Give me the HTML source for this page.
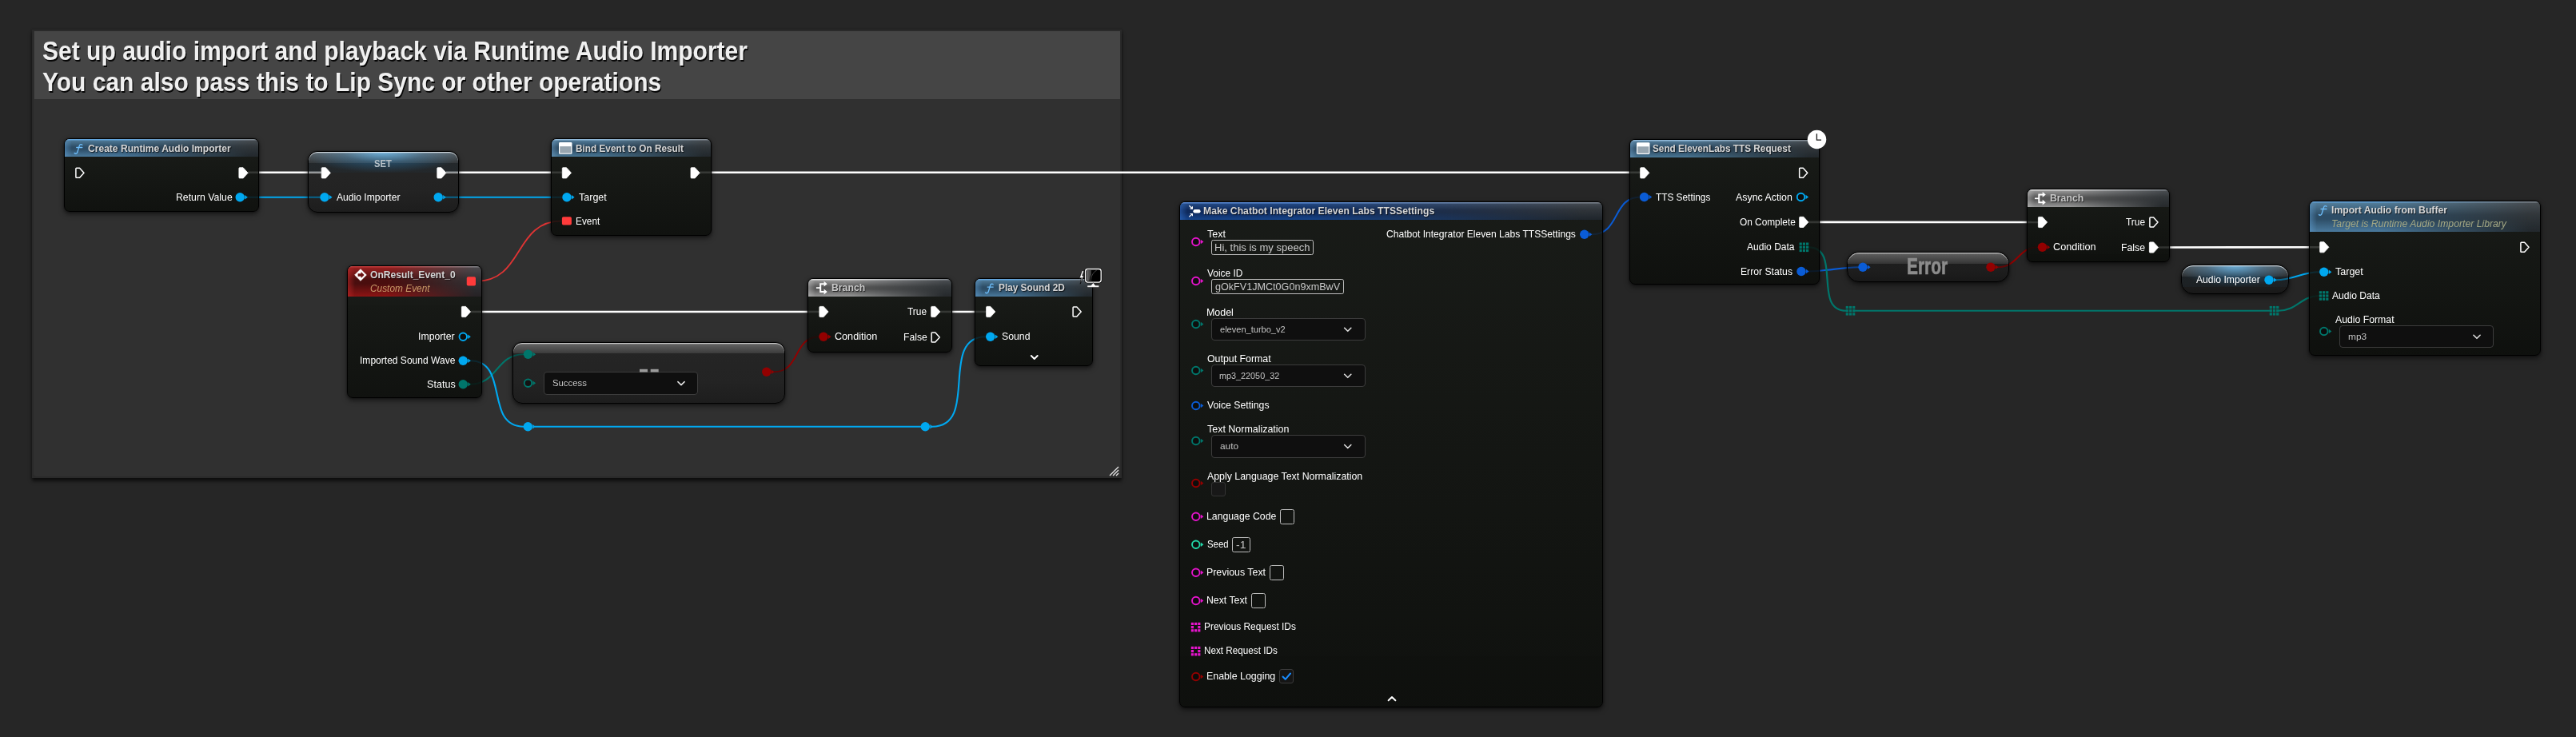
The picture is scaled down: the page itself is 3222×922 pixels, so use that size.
<!DOCTYPE html><html><head><meta charset="utf-8"><title>Blueprint</title><style>

html,body{margin:0;padding:0}
body{width:3222px;height:922px;background:#262626;position:relative;overflow:hidden;font-family:"Liberation Sans",sans-serif}
.node{position:absolute;box-sizing:border-box;border:1px solid #000;background:linear-gradient(180deg,rgba(22,25,21,.84),rgba(11,13,10,.86));box-shadow:0 3px 6px rgba(0,0,0,.55),0 0 2px rgba(0,0,0,.6);overflow:hidden}
.vnode{background:linear-gradient(180deg,rgba(18,18,18,.36),rgba(16,16,16,.40) 65%,rgba(12,12,12,.52))}
.nh{position:absolute;left:0;top:0;right:0}
.cs{position:absolute;left:0;top:0;right:0;-webkit-mask-image:linear-gradient(90deg,#000 0,#000 30%,rgba(0,0,0,.06) 95%,rgba(0,0,0,.05) 100%);mask-image:linear-gradient(90deg,#000 0,#000 30%,rgba(0,0,0,.06) 95%,rgba(0,0,0,.05) 100%)}
.gl{position:absolute;left:0;top:0;right:0}
.dd{position:absolute;background:#0f0f0f;border:1px solid #3c3c3c;border-radius:4px}
.tb{position:absolute;background:transparent;border:1px solid #bdbdbd;border-radius:2.5px}
.t{position:absolute;white-space:nowrap;line-height:1;transform-origin:0 50%}
svg{position:absolute;left:0;top:0;overflow:visible}
#cm{position:absolute;left:40px;top:37px;width:1363px;height:561px;background:#2a2a2a;box-shadow:0 4px 4px rgba(0,0,0,.6),0 0 3px rgba(0,0,0,.25)}
#cmb{position:absolute;left:42.4px;top:39px;width:1358.6px;height:557px;background:#303030;border-radius:0 0 4px 4px}
#cmt{position:absolute;left:43px;top:39px;width:1358px;height:85.4px;background:#454545}

</style></head><body>
<div id="cm"></div><div id="cmb"></div><div id="cmt"></div>
<svg width="3222" height="922" viewBox="0 0 3222 922"><path d="M310,215.8 L402,215.8" fill="none" stroke="#fff" stroke-width="2.6"/><path d="M558,215.8 L703,215.8" fill="none" stroke="#fff" stroke-width="2.6"/><path d="M875,215.8 L2052,215.8" fill="none" stroke="#fff" stroke-width="2.6"/><path d="M589,390 L1025,390" fill="none" stroke="#fff" stroke-width="2.6"/><path d="M1176,390 L1234,390" fill="none" stroke="#fff" stroke-width="2.6"/><path d="M2262,277.9 L2550,278" fill="none" stroke="#fff" stroke-width="2.6"/><path d="M2700,309.5 L2902,309.25" fill="none" stroke="#fff" stroke-width="2.6"/><path d="M309,246.7 L401,246.7" fill="none" stroke="#00a8f0" stroke-width="2.1"/><path d="M557,246.7 L704,246.7" fill="none" stroke="#00a8f0" stroke-width="2.1"/><path d="M595,352 C656.20,352 641.80,276.4 703,276.4" fill="none" stroke="#e03434" stroke-width="1.8" stroke-linecap="round" /><path d="M588,480.75 C622.83,480.75 620.17,443.25 655,443.25" fill="none" stroke="#00766b" stroke-width="2.0" stroke-linecap="round" /><path d="M588,451.25 C637.82,451.25 605.18,533.7 655,533.7" fill="none" stroke="#00a8f0" stroke-width="2.1" stroke-linecap="round" /><path d="M669,533.7 L1152,533.7" fill="none" stroke="#00a8f0" stroke-width="2.1"/><path d="M1166,533.7 C1225.82,533.7 1173.18,421.25 1233,421.25" fill="none" stroke="#00a8f0" stroke-width="2.1" stroke-linecap="round" /><path d="M968,465.25 C1001.67,465.25 991.33,421.25 1025,421.25" fill="none" stroke="#930000" stroke-width="1.9" stroke-linecap="round" /><path d="M1991,293.25 C2026.92,293.25 2016.08,246.5 2052,246.5" fill="none" stroke="#0a5cd6" stroke-width="2.1" stroke-linecap="round" /><path d="M2262,339.5 C2284.75,339.5 2302.25,334.25 2325,334.25" fill="none" stroke="#0a5cd6" stroke-width="2.1" stroke-linecap="round" /><path d="M2499,334.25 C2524.00,334.25 2524.00,309.25 2549,309.25" fill="none" stroke="#930000" stroke-width="1.9" stroke-linecap="round" /><path d="M2262,309.3 C2304.15,309.3 2266.85,388.75 2309,388.75" fill="none" stroke="#00766b" stroke-width="2.2" stroke-linecap="round" /><path d="M2320,388.75 L2839,388.75" fill="none" stroke="#00766b" stroke-width="2.2"/><path d="M2850,388.75 C2873.25,388.75 2877.75,370 2901,370" fill="none" stroke="#00766b" stroke-width="2.2" stroke-linecap="round" /><path d="M2847,350.25 C2868.33,350.25 2879.67,340.25 2901,340.25" fill="none" stroke="#00a8f0" stroke-width="2.1" stroke-linecap="round" /></svg>
<div class="node " style="left:80px;top:173px;width:244px;height:91.5px;border-radius:7px"><div class="nh" style="height:22px;background:linear-gradient(180deg,#4a4e52 0,#33373a 40%,#202427 100%);box-shadow:inset 0 1.5px 0 #80868c"><div class="cs" style="height:22px;background:linear-gradient(90deg,rgba(90,150,200,.55) 0,rgba(0,0,0,0) 9px),linear-gradient(180deg,#56829f 0,#2d4d66 45%,#2d4d66 58%,#4a7a9e 100%);box-shadow:inset 0 1.5px 0 #62a4dc"></div></div></div>
<div class="node vnode" style="left:385px;top:189px;width:189px;height:76.5px;border-radius:12px"><div class="gl" style="height:26px;border-radius:11px 11px 0 0;background:radial-gradient(ellipse 55% 100% at 50% 0,rgba(70,165,225,.9),rgba(40,105,150,.55) 50%,rgba(30,60,80,.15) 100%)"></div><div class="gl" style="height:13.5px;border-radius:11px 11px 0 0;background:linear-gradient(180deg,rgba(255,255,255,.25),rgba(255,255,255,.07));box-shadow:inset 0 1.2px 0 rgba(240,245,250,.75)"></div></div>
<div class="node " style="left:689px;top:173px;width:200.6px;height:121.5px;border-radius:7px"><div class="nh" style="height:22px;background:linear-gradient(180deg,#4a4e52 0,#33373a 40%,#202427 100%);box-shadow:inset 0 1.5px 0 #80868c"><div class="cs" style="height:22px;background:linear-gradient(90deg,rgba(110,160,200,.5) 0,rgba(0,0,0,0) 9px),linear-gradient(180deg,#5a85a3 0,#2c4a62 45%,#2c4a62 58%,#4a7896 100%);box-shadow:inset 0 1.5px 0 #90b8d8"></div></div></div>
<div class="node " style="left:433.75px;top:331.75px;width:168.75px;height:166.5px;border-radius:7px"><div class="nh" style="height:38.5px;background:linear-gradient(180deg,#4a4e52 0,#33373a 40%,#202427 100%);box-shadow:inset 0 1.5px 0 #80868c"><div class="cs" style="height:38.5px;background:linear-gradient(90deg,rgba(190,40,40,.55) 0,rgba(0,0,0,0) 9px),linear-gradient(180deg,#a02222 0,#4a0e0e 45%,#4a0e0e 58%,#8e1414 100%);box-shadow:inset 0 1.5px 0 #c03a3a"></div></div></div>
<div class="node vnode" style="left:641.25px;top:427.5px;width:340.5px;height:77px;border-radius:12px"><div class="gl" style="height:13.5px;border-radius:11px 11px 0 0;background:linear-gradient(180deg,rgba(255,255,255,.30),rgba(255,255,255,.10));box-shadow:inset 0 1.2px 0 rgba(240,240,240,.7)"></div></div>
<div class="dd" style="left:680px;top:465px;width:191px;height:26.6px"></div>
<div class="node " style="left:1010px;top:348px;width:181px;height:92.6px;border-radius:7px"><div class="nh" style="height:22px;background:linear-gradient(180deg,#4a4e52 0,#33373a 40%,#202427 100%);box-shadow:inset 0 1.5px 0 #80868c"><div class="cs" style="height:22px;background:linear-gradient(90deg,rgba(200,200,200,.45) 0,rgba(0,0,0,0) 9px),linear-gradient(180deg,#a2a2a2 0,#585858 45%,#585858 58%,#989898 100%);box-shadow:inset 0 1.5px 0 #dcdcdc"></div></div></div>
<div class="node " style="left:1219px;top:348px;width:147.6px;height:110px;border-radius:7px"><div class="nh" style="height:22px;background:linear-gradient(180deg,#4a4e52 0,#33373a 40%,#202427 100%);box-shadow:inset 0 1.5px 0 #80868c"><div class="cs" style="height:22px;background:linear-gradient(90deg,rgba(90,150,200,.55) 0,rgba(0,0,0,0) 9px),linear-gradient(180deg,#56829f 0,#2d4d66 45%,#2d4d66 58%,#4a7a9e 100%);box-shadow:inset 0 1.5px 0 #62a4dc"></div></div></div>
<div class="node " style="left:1475px;top:251.5px;width:529.5px;height:633.4px;border-radius:7px"><div class="nh" style="height:22px;background:linear-gradient(180deg,#4a4e52 0,#33373a 40%,#202427 100%);box-shadow:inset 0 1.5px 0 #80868c"><div class="cs" style="height:22px;background:linear-gradient(90deg,rgba(50,110,200,.5) 0,rgba(0,0,0,0) 9px),linear-gradient(180deg,#28508c 0,#0f2a5c 45%,#0f2a5c 58%,#16448c 100%);box-shadow:inset 0 1.5px 0 #5a8cd8"></div></div></div>
<div class="tb" style="left:1515px;top:300.25px;width:126px;height:17px"></div>
<div class="tb" style="left:1515px;top:349.25px;width:164px;height:17px"></div>
<div class="dd" style="left:1515px;top:398px;width:190.5px;height:26px"></div>
<div class="dd" style="left:1515px;top:456px;width:190.5px;height:26px"></div>
<div class="dd" style="left:1515px;top:544px;width:190.5px;height:26.5px"></div>
<div style="position:absolute;left:1515px;top:603.25px;width:16px;height:15.5px;border:1px solid #333;border-radius:3px;background:#181818"></div>
<div class="tb" style="left:1601px;top:637.25px;width:16px;height:16.5px"></div>
<div class="tb" style="left:1541px;top:672px;width:21px;height:16.75px"></div>
<div class="tb" style="left:1588px;top:707.25px;width:16px;height:16.5px"></div>
<div class="tb" style="left:1565px;top:742.25px;width:16px;height:16.75px"></div>
<div style="position:absolute;left:1600.25px;top:837.25px;width:15.75px;height:15.25px;border:1px solid #3a3a3a;border-radius:3px;background:#151515"></div>
<div class="node " style="left:2038.25px;top:174.25px;width:237.25px;height:181.5px;border-radius:7px"><div class="nh" style="height:22px;background:linear-gradient(180deg,#4a4e52 0,#33373a 40%,#202427 100%);box-shadow:inset 0 1.5px 0 #80868c"><div class="cs" style="height:22px;background:linear-gradient(90deg,rgba(110,160,200,.5) 0,rgba(0,0,0,0) 9px),linear-gradient(180deg,#5a85a3 0,#2c4a62 45%,#2c4a62 58%,#4a7896 100%);box-shadow:inset 0 1.5px 0 #90b8d8"></div></div></div>
<div class="node vnode" style="left:2310px;top:315px;width:203px;height:37.5px;border-radius:15px"><div class="gl" style="height:14px;border-radius:14px 14px 0 0;background:linear-gradient(180deg,rgba(255,255,255,.30),rgba(255,255,255,.10));box-shadow:inset 0 1.2px 0 rgba(240,240,240,.7)"></div></div>
<div class="node " style="left:2534.6px;top:236px;width:179.2px;height:92px;border-radius:7px"><div class="nh" style="height:22px;background:linear-gradient(180deg,#4a4e52 0,#33373a 40%,#202427 100%);box-shadow:inset 0 1.5px 0 #80868c"><div class="cs" style="height:22px;background:linear-gradient(90deg,rgba(200,200,200,.45) 0,rgba(0,0,0,0) 9px),linear-gradient(180deg,#a2a2a2 0,#585858 45%,#585858 58%,#989898 100%);box-shadow:inset 0 1.5px 0 #dcdcdc"></div></div></div>
<div class="node vnode" style="left:2727.5px;top:331.4px;width:135px;height:37px;border-radius:15px"><div class="gl" style="height:27px;border-radius:14px 14px 0 0;background:radial-gradient(ellipse 55% 100% at 50% 0,rgba(70,165,225,.9),rgba(40,105,150,.55) 50%,rgba(30,60,80,.15) 100%)"></div><div class="gl" style="height:14px;border-radius:14px 14px 0 0;background:linear-gradient(180deg,rgba(255,255,255,.25),rgba(255,255,255,.07));box-shadow:inset 0 1.2px 0 rgba(240,245,250,.75)"></div></div>
<div class="node " style="left:2887.5px;top:250.5px;width:290px;height:194.5px;border-radius:7px"><div class="nh" style="height:38.2px;background:linear-gradient(180deg,#4a4e52 0,#33373a 40%,#202427 100%);box-shadow:inset 0 1.5px 0 #80868c"><div class="cs" style="height:38.2px;background:linear-gradient(90deg,rgba(90,150,200,.55) 0,rgba(0,0,0,0) 9px),linear-gradient(180deg,#56829f 0,#2d4d66 45%,#2d4d66 58%,#4a7a9e 100%);box-shadow:inset 0 1.5px 0 #62a4dc"></div></div></div>
<div class="dd" style="left:2926px;top:407px;width:191px;height:26px"></div>
<svg width="3222" height="922" viewBox="0 0 3222 922"><path d="M1388,595 L1399,584 M1392,595 L1399,588 M1396,595 L1399,592" stroke="#e8e8e8" stroke-width="1.3" fill="none"/><path d="M102.8,181.3 C101.8,180.1 99.8,180.3 99.19999999999999,182.6 L96.89999999999999,190.2 C96.3,192.2 94.5,192.8 93.19999999999999,191.5" fill="none" stroke="#6cbcf8" stroke-width="1.35" stroke-linecap="round"/><path d="M95.8,184.5 H102.8" fill="none" stroke="#6cbcf8" stroke-width="1.3" stroke-linecap="round"/><path d="M95.6,210.3 H99.6 L105,216.3 L99.6,222.3 H95.6 Q94.9,222.3 94.9,221.5 V211.10000000000002 Q94.9,210.3 95.6,210.3 Z" fill="none" stroke="#fff" stroke-width="1.5" stroke-linejoin="round"/><path d="M299.7,209.70000000000002 H304.1 L310.1,216.3 L304.1,222.9 H299.7 Q298.9,222.9 298.9,221.9 V210.70000000000002 Q298.9,209.70000000000002 299.7,209.70000000000002 Z" fill="#fff" stroke="#fff" stroke-width="0.8" stroke-linejoin="round"/><circle cx="300.2" cy="246.7" r="5.7" fill="#00a8f0"/><path d="M306.2,244.0 L309.8,246.7 L306.2,249.39999999999998 Z" fill="#00a8f0"/><path d="M403.0,209.70000000000002 H407.40000000000003 L413.40000000000003,216.3 L407.40000000000003,222.9 H403.0 Q402.2,222.9 402.2,221.9 V210.70000000000002 Q402.2,209.70000000000002 403.0,209.70000000000002 Z" fill="#fff" stroke="#fff" stroke-width="0.8" stroke-linejoin="round"/><path d="M547.6,209.70000000000002 H552.0 L558.0,216.3 L552.0,222.9 H547.6 Q546.8,222.9 546.8,221.9 V210.70000000000002 Q546.8,209.70000000000002 547.6,209.70000000000002 Z" fill="#fff" stroke="#fff" stroke-width="0.8" stroke-linejoin="round"/><circle cx="406" cy="246.7" r="5.7" fill="#00a8f0"/><path d="M412.0,244.0 L415.6,246.7 L412.0,249.39999999999998 Z" fill="#00a8f0"/><circle cx="548.2" cy="246.7" r="5.7" fill="#00a8f0"/><path d="M554.2,244.0 L557.8000000000001,246.7 L554.2,249.39999999999998 Z" fill="#00a8f0"/><rect x="699" y="178" width="16.5" height="14.8" rx="1.4" fill="#fff"/><rect x="700.2" y="183.1" width="14.1" height="8.5" fill="#98a6b0"/><path d="M704.1,209.70000000000002 H708.5 L714.5,216.3 L708.5,222.9 H704.1 Q703.3,222.9 703.3,221.9 V210.70000000000002 Q703.3,209.70000000000002 704.1,209.70000000000002 Z" fill="#fff" stroke="#fff" stroke-width="0.8" stroke-linejoin="round"/><path d="M864.8000000000001,209.70000000000002 H869.2 L875.2,216.3 L869.2,222.9 H864.8000000000001 Q864.0,222.9 864.0,221.9 V210.70000000000002 Q864.0,209.70000000000002 864.8000000000001,209.70000000000002 Z" fill="#fff" stroke="#fff" stroke-width="0.8" stroke-linejoin="round"/><circle cx="709" cy="246.7" r="5.7" fill="#00a8f0"/><path d="M715.0,244.0 L718.6,246.7 L715.0,249.39999999999998 Z" fill="#00a8f0"/><rect x="702.9" y="271.2" width="12" height="10.4" rx="1.8" fill="#ff3b3b"/><path d="M443.7,344 L451,336.7 L458.3,344 L451,351.3 Z" fill="#fff" stroke="#fff" stroke-width="0.8" stroke-linejoin="round"/><path d="M447.6,342.3 H451.6 V340.1 L455.6,344 L451.6,347.9 V345.7 H447.6 Z" fill="#6a1010"/><rect x="583.75" y="346.25" width="11.25" height="11.25" rx="1.8" fill="#ff3b3b"/><path d="M578.2,383.4 H582.6 L588.6,390 L582.6,396.6 H578.2 Q577.4,396.6 577.4,395.6 V384.4 Q577.4,383.4 578.2,383.4 Z" fill="#fff" stroke="#fff" stroke-width="0.8" stroke-linejoin="round"/><circle cx="579.25" cy="421.25" r="4.75" fill="rgba(8,8,8,.55)" stroke="#00a8f0" stroke-width="1.9"/><path d="M585.25,418.55 L588.85,421.25 L585.25,423.95 Z" fill="#00a8f0"/><circle cx="579.25" cy="451.25" r="5.7" fill="#00a8f0"/><path d="M585.25,448.55 L588.85,451.25 L585.25,453.95 Z" fill="#00a8f0"/><circle cx="579.25" cy="480.75" r="5.7" fill="#00766b"/><path d="M585.25,478.05 L588.85,480.75 L585.25,483.45 Z" fill="#00766b"/><circle cx="660.5" cy="443.25" r="5.7" fill="#00766b"/><path d="M666.5,440.55 L670.1,443.25 L666.5,445.95 Z" fill="#00766b"/><circle cx="660.5" cy="479.25" r="4.75" fill="rgba(8,8,8,.55)" stroke="#00766b" stroke-width="1.9"/><path d="M666.5,476.55 L670.1,479.25 L666.5,481.95 Z" fill="#00766b"/><circle cx="958.75" cy="465.25" r="5.7" fill="#930000"/><path d="M964.75,462.55 L968.35,465.25 L964.75,467.95 Z" fill="#930000"/><rect x="800" y="461.8" width="10" height="3.7" fill="#9a9a9a"/><rect x="813.7" y="461.8" width="10" height="3.7" fill="#9a9a9a"/><path d="M847.9,477.6 L852,481.6 L856.1,477.6" fill="none" stroke="#e0e0e0" stroke-width="1.6" stroke-linecap="round" stroke-linejoin="round"/><path d="M1020.9,360.1 H1026.1" stroke="#fff" stroke-width="1.7" fill="none"/><path d="M1030.9,355.20000000000005 H1026.2 V365.0 H1030.9" stroke="#fff" stroke-width="2" fill="none"/><path d="M1030.6,351.8 L1034.7,355.20000000000005 L1030.6,358.6 Z M1030.6,361.6 L1034.7,365.0 L1030.6,368.40000000000003 Z" fill="#fff"/><path d="M1025.7,383.4 H1030.1 L1036.1,390 L1030.1,396.6 H1025.7 Q1024.9,396.6 1024.9,395.6 V384.4 Q1024.9,383.4 1025.7,383.4 Z" fill="#fff" stroke="#fff" stroke-width="0.8" stroke-linejoin="round"/><path d="M1165.45,383.4 H1169.85 L1175.85,390 L1169.85,396.6 H1165.45 Q1164.65,396.6 1164.65,395.6 V384.4 Q1164.65,383.4 1165.45,383.4 Z" fill="#fff" stroke="#fff" stroke-width="0.8" stroke-linejoin="round"/><circle cx="1030" cy="421.25" r="5.7" fill="#930000"/><path d="M1036.0,418.55 L1039.6,421.25 L1036.0,423.95 Z" fill="#930000"/><path d="M1165.85,416 H1169.85 L1175.25,422 L1169.85,428 H1165.85 Q1165.15,428 1165.15,427.2 V416.8 Q1165.15,416 1165.85,416 Z" fill="none" stroke="#fff" stroke-width="1.5" stroke-linejoin="round"/><path d="M1242.2,355.90000000000003 C1241.2,354.70000000000005 1239.2,354.90000000000003 1238.6,357.20000000000005 L1236.3,364.8 C1235.7,366.8 1233.9,367.40000000000003 1232.6,366.1" fill="none" stroke="#6cbcf8" stroke-width="1.35" stroke-linecap="round"/><path d="M1235.2,359.1 H1242.2" fill="none" stroke="#6cbcf8" stroke-width="1.3" stroke-linecap="round"/><path d="M1234.45,383.4 H1238.85 L1244.85,390 L1238.85,396.6 H1234.45 Q1233.65,396.6 1233.65,395.6 V384.4 Q1233.65,383.4 1234.45,383.4 Z" fill="#fff" stroke="#fff" stroke-width="0.8" stroke-linejoin="round"/><path d="M1342.8,384 H1346.8 L1352.2,390 L1346.8,396 H1342.8 Q1342.1000000000001,396 1342.1000000000001,395.2 V384.8 Q1342.1000000000001,384 1342.8,384 Z" fill="none" stroke="#fff" stroke-width="1.5" stroke-linejoin="round"/><circle cx="1238.75" cy="421.25" r="5.7" fill="#00a8f0"/><path d="M1244.75,418.55 L1248.35,421.25 L1244.75,423.95 Z" fill="#00a8f0"/><path d="M1289.8,445 L1293.75,449 L1297.7,445" fill="none" stroke="#fff" stroke-width="1.9" stroke-linecap="round" stroke-linejoin="round"/><defs><linearGradient id="mg" x1="0" y1="0" x2="1" y2="0"><stop offset="0" stop-color="#6a6a6a"/><stop offset=".45" stop-color="#3a3a3a"/><stop offset=".5" stop-color="#000"/><stop offset="1" stop-color="#000"/></linearGradient></defs><rect x="1356.4" y="335.3" width="22" height="19" rx="3.6" fill="#000"/><rect x="1357.6" y="336.5" width="19.6" height="16.6" rx="2.8" fill="#000" stroke="#fff" stroke-width="1.3"/><path d="M1359,338 H1371.5 C1365.5,341 1363,346 1362.6,351.8 H1359 Z" fill="url(#mg)"/><path d="M1371.8,338 C1366.6,341.2 1364.6,346 1364.2,351.8" fill="none" stroke="#555" stroke-width="0.8"/><path d="M1367.4,353.6 L1364.6,357 H1360.6 Q1359.8,357 1359.8,357.8 V358.6 Q1359.8,359.4 1360.6,359.4 H1374 Q1374.8,359.4 1374.8,358.6 V357.8 Q1374.8,357 1374,357 H1370 L1367.4,353.6 Z" fill="#fff" stroke="#000" stroke-width="0.5"/><path d="M1353.4,338.6 L1356,338.6 L1353.7,344.7 L1355.7,344.2 L1351.2,355.2 L1352.5,347.6 L1350,348.3 Z" fill="#fff" stroke="#000" stroke-width="0.7" stroke-linejoin="round"/><circle cx="660.3" cy="533.7" r="5.7" fill="#00a8f0"/><path d="M666.3,531.0 L669.9,533.7 L666.3,536.4000000000001 Z" fill="#00a8f0"/><circle cx="1157.3" cy="533.7" r="5.7" fill="#00a8f0"/><path d="M1163.3,531.0 L1166.8999999999999,533.7 L1163.3,536.4000000000001 Z" fill="#00a8f0"/><rect x="1492.4" y="262.1" width="9.2" height="4.4" rx="2.2" fill="#fff"/><path d="M1487.4,257.3 L1491.0,260.7 M1488.6000000000001,261.1 H1491.4 V258.3" stroke="#fff" stroke-width="1.2" fill="none"/><path d="M1487.4,271.3 L1491.0,267.90000000000003 M1488.6000000000001,267.5 H1491.4 V270.3" stroke="#fff" stroke-width="1.2" fill="none"/><circle cx="1495.8" cy="302.5" r="4.75" fill="rgba(8,8,8,.55)" stroke="#e614cc" stroke-width="1.9"/><path d="M1501.8,299.8 L1505.3999999999999,302.5 L1501.8,305.2 Z" fill="#e614cc"/><circle cx="1495.8" cy="351.5" r="4.75" fill="rgba(8,8,8,.55)" stroke="#e614cc" stroke-width="1.9"/><path d="M1501.8,348.8 L1505.3999999999999,351.5 L1501.8,354.2 Z" fill="#e614cc"/><circle cx="1495.8" cy="405.5" r="4.75" fill="rgba(8,8,8,.55)" stroke="#00766b" stroke-width="1.9"/><path d="M1501.8,402.8 L1505.3999999999999,405.5 L1501.8,408.2 Z" fill="#00766b"/><path d="M1681.65,410.3 L1685.75,414.3 L1689.85,410.3" fill="none" stroke="#e0e0e0" stroke-width="1.6" stroke-linecap="round" stroke-linejoin="round"/><circle cx="1495.8" cy="463.5" r="4.75" fill="rgba(8,8,8,.55)" stroke="#00766b" stroke-width="1.9"/><path d="M1501.8,460.8 L1505.3999999999999,463.5 L1501.8,466.2 Z" fill="#00766b"/><path d="M1681.65,468.3 L1685.75,472.3 L1689.85,468.3" fill="none" stroke="#e0e0e0" stroke-width="1.6" stroke-linecap="round" stroke-linejoin="round"/><circle cx="1495.8" cy="507.5" r="4.75" fill="rgba(8,8,8,.55)" stroke="#0a5cd6" stroke-width="1.9"/><path d="M1501.8,504.8 L1505.3999999999999,507.5 L1501.8,510.2 Z" fill="#0a5cd6"/><circle cx="1495.8" cy="551.5" r="4.75" fill="rgba(8,8,8,.55)" stroke="#00766b" stroke-width="1.9"/><path d="M1501.8,548.8 L1505.3999999999999,551.5 L1501.8,554.2 Z" fill="#00766b"/><path d="M1681.65,556.55 L1685.75,560.55 L1689.85,556.55" fill="none" stroke="#e0e0e0" stroke-width="1.6" stroke-linecap="round" stroke-linejoin="round"/><circle cx="1495.8" cy="604.5" r="4.75" fill="rgba(8,8,8,.55)" stroke="#930000" stroke-width="1.9"/><path d="M1501.8,601.8 L1505.3999999999999,604.5 L1501.8,607.2 Z" fill="#930000"/><circle cx="1495.8" cy="646.25" r="4.75" fill="rgba(8,8,8,.55)" stroke="#e614cc" stroke-width="1.9"/><path d="M1501.8,643.55 L1505.3999999999999,646.25 L1501.8,648.95 Z" fill="#e614cc"/><circle cx="1495.8" cy="681.25" r="4.75" fill="rgba(8,8,8,.55)" stroke="#22d8a8" stroke-width="1.9"/><path d="M1501.8,678.55 L1505.3999999999999,681.25 L1501.8,683.95 Z" fill="#22d8a8"/><circle cx="1495.8" cy="716.25" r="4.75" fill="rgba(8,8,8,.55)" stroke="#e614cc" stroke-width="1.9"/><path d="M1501.8,713.55 L1505.3999999999999,716.25 L1501.8,718.95 Z" fill="#e614cc"/><circle cx="1495.8" cy="751.5" r="4.75" fill="rgba(8,8,8,.55)" stroke="#e614cc" stroke-width="1.9"/><path d="M1501.8,748.8 L1505.3999999999999,751.5 L1501.8,754.2 Z" fill="#e614cc"/><rect x="1489.80" y="778.80" width="3.2" height="3.2" fill="#e614cc"/><rect x="1489.80" y="783.00" width="3.2" height="3.2" fill="#e614cc"/><rect x="1489.80" y="787.20" width="3.2" height="3.2" fill="#e614cc"/><rect x="1494.00" y="778.80" width="3.2" height="3.2" fill="#e614cc"/><rect x="1494.00" y="787.20" width="3.2" height="3.2" fill="#e614cc"/><rect x="1498.20" y="778.80" width="3.2" height="3.2" fill="#e614cc"/><rect x="1498.20" y="783.00" width="3.2" height="3.2" fill="#e614cc"/><rect x="1498.20" y="787.20" width="3.2" height="3.2" fill="#e614cc"/><rect x="1489.80" y="808.80" width="3.2" height="3.2" fill="#e614cc"/><rect x="1489.80" y="813.00" width="3.2" height="3.2" fill="#e614cc"/><rect x="1489.80" y="817.20" width="3.2" height="3.2" fill="#e614cc"/><rect x="1494.00" y="808.80" width="3.2" height="3.2" fill="#e614cc"/><rect x="1494.00" y="817.20" width="3.2" height="3.2" fill="#e614cc"/><rect x="1498.20" y="808.80" width="3.2" height="3.2" fill="#e614cc"/><rect x="1498.20" y="813.00" width="3.2" height="3.2" fill="#e614cc"/><rect x="1498.20" y="817.20" width="3.2" height="3.2" fill="#e614cc"/><circle cx="1495.8" cy="846.5" r="4.75" fill="rgba(8,8,8,.55)" stroke="#930000" stroke-width="1.9"/><path d="M1501.8,843.8 L1505.3999999999999,846.5 L1501.8,849.2 Z" fill="#930000"/><path d="M1604.5,846.5 L1607.7,849.8 L1614,842.5" fill="none" stroke="#1a8cff" stroke-width="2" stroke-linecap="round" stroke-linejoin="round"/><path d="M1736.6,876.3 L1741,872 L1745.4,876.3" fill="none" stroke="#fff" stroke-width="1.9" stroke-linecap="round" stroke-linejoin="round"/><circle cx="1981.75" cy="293.25" r="5.7" fill="#0a5cd6"/><path d="M1987.75,290.55 L1991.35,293.25 L1987.75,295.95 Z" fill="#0a5cd6"/><rect x="2047" y="178.2" width="16.5" height="14.8" rx="1.4" fill="#fff"/><rect x="2048.2" y="183.29999999999998" width="14.1" height="8.5" fill="#98a6b0"/><path d="M2052.45,209.70000000000002 H2056.85 L2062.85,216.3 L2056.85,222.9 H2052.45 Q2051.65,222.9 2051.65,221.9 V210.70000000000002 Q2051.65,209.70000000000002 2052.45,209.70000000000002 Z" fill="#fff" stroke="#fff" stroke-width="0.8" stroke-linejoin="round"/><path d="M2251.35,210.3 H2255.35 L2260.75,216.3 L2255.35,222.3 H2251.35 Q2250.65,222.3 2250.65,221.5 V211.10000000000002 Q2250.65,210.3 2251.35,210.3 Z" fill="none" stroke="#fff" stroke-width="1.5" stroke-linejoin="round"/><circle cx="2056.6" cy="246.5" r="5.7" fill="#0a5cd6"/><path d="M2062.6,243.8 L2066.2,246.5 L2062.6,249.2 Z" fill="#0a5cd6"/><circle cx="2252.5" cy="246.5" r="4.75" fill="rgba(8,8,8,.55)" stroke="#00a8f0" stroke-width="1.9"/><path d="M2258.5,243.8 L2262.1,246.5 L2258.5,249.2 Z" fill="#00a8f0"/><path d="M2251.45,271.29999999999995 H2255.85 L2261.85,277.9 L2255.85,284.5 H2251.45 Q2250.65,284.5 2250.65,283.5 V272.29999999999995 Q2250.65,271.29999999999995 2251.45,271.29999999999995 Z" fill="#fff" stroke="#fff" stroke-width="0.8" stroke-linejoin="round"/><rect x="2250.60" y="303.50" width="3.2" height="3.2" fill="#00766b"/><rect x="2250.60" y="307.70" width="3.2" height="3.2" fill="#00766b"/><rect x="2250.60" y="311.90" width="3.2" height="3.2" fill="#00766b"/><rect x="2254.80" y="303.50" width="3.2" height="3.2" fill="#00766b"/><rect x="2254.80" y="307.70" width="3.2" height="3.2" fill="#00766b"/><rect x="2254.80" y="311.90" width="3.2" height="3.2" fill="#00766b"/><rect x="2259.00" y="303.50" width="3.2" height="3.2" fill="#00766b"/><rect x="2259.00" y="307.70" width="3.2" height="3.2" fill="#00766b"/><rect x="2259.00" y="311.90" width="3.2" height="3.2" fill="#00766b"/><circle cx="2253" cy="339.5" r="5.7" fill="#0a5cd6"/><path d="M2259.0,336.8 L2262.6,339.5 L2259.0,342.2 Z" fill="#0a5cd6"/><circle cx="2272.5" cy="174.5" r="11.75" fill="#fff"/><path d="M2272.4,167.2 V175.2 H2278" fill="none" stroke="#1a1a1a" stroke-width="1.3"/><circle cx="2330" cy="334.25" r="5.7" fill="#0a5cd6"/><path d="M2336.0,331.55 L2339.6,334.25 L2336.0,336.95 Z" fill="#0a5cd6"/><circle cx="2490" cy="334.25" r="5.7" fill="#930000"/><path d="M2496.0,331.55 L2499.6,334.25 L2496.0,336.95 Z" fill="#930000"/><rect x="2308.70" y="382.95" width="3.2" height="3.2" fill="#00766b"/><rect x="2308.70" y="387.15" width="3.2" height="3.2" fill="#00766b"/><rect x="2308.70" y="391.35" width="3.2" height="3.2" fill="#00766b"/><rect x="2312.90" y="382.95" width="3.2" height="3.2" fill="#00766b"/><rect x="2312.90" y="387.15" width="3.2" height="3.2" fill="#00766b"/><rect x="2312.90" y="391.35" width="3.2" height="3.2" fill="#00766b"/><rect x="2317.10" y="382.95" width="3.2" height="3.2" fill="#00766b"/><rect x="2317.10" y="387.15" width="3.2" height="3.2" fill="#00766b"/><rect x="2317.10" y="391.35" width="3.2" height="3.2" fill="#00766b"/><rect x="2838.70" y="382.95" width="3.2" height="3.2" fill="#00766b"/><rect x="2838.70" y="387.15" width="3.2" height="3.2" fill="#00766b"/><rect x="2838.70" y="391.35" width="3.2" height="3.2" fill="#00766b"/><rect x="2842.90" y="382.95" width="3.2" height="3.2" fill="#00766b"/><rect x="2842.90" y="387.15" width="3.2" height="3.2" fill="#00766b"/><rect x="2842.90" y="391.35" width="3.2" height="3.2" fill="#00766b"/><rect x="2847.10" y="382.95" width="3.2" height="3.2" fill="#00766b"/><rect x="2847.10" y="387.15" width="3.2" height="3.2" fill="#00766b"/><rect x="2847.10" y="391.35" width="3.2" height="3.2" fill="#00766b"/><path d="M2545,248.3 H2550.2" stroke="#fff" stroke-width="1.7" fill="none"/><path d="M2555,243.4 H2550.3 V253.20000000000002 H2555" stroke="#fff" stroke-width="2" fill="none"/><path d="M2554.7,240.0 L2558.8,243.4 L2554.7,246.8 Z M2554.7,249.8 L2558.8,253.20000000000002 L2554.7,256.6 Z" fill="#fff"/><path d="M2550.2,271.4 H2554.6 L2560.6,278 L2554.6,284.6 H2550.2 Q2549.4,284.6 2549.4,283.6 V272.4 Q2549.4,271.4 2550.2,271.4 Z" fill="#fff" stroke="#fff" stroke-width="0.8" stroke-linejoin="round"/><path d="M2689.6,272 H2693.6 L2699,278 L2693.6,284 H2689.6 Q2688.9,284 2688.9,283.2 V272.8 Q2688.9,272 2689.6,272 Z" fill="none" stroke="#fff" stroke-width="1.5" stroke-linejoin="round"/><circle cx="2554.5" cy="309.25" r="5.7" fill="#930000"/><path d="M2560.5,306.55 L2564.1,309.25 L2560.5,311.95 Z" fill="#930000"/><path d="M2689.2,302.9 H2693.6 L2699.6,309.5 L2693.6,316.1 H2689.2 Q2688.4,316.1 2688.4,315.1 V303.9 Q2688.4,302.9 2689.2,302.9 Z" fill="#fff" stroke="#fff" stroke-width="0.8" stroke-linejoin="round"/><circle cx="2838" cy="350.25" r="5.7" fill="#00a8f0"/><path d="M2844.0,347.55 L2847.6,350.25 L2844.0,352.95 Z" fill="#00a8f0"/><path d="M2910.0,258.3 C2909.0,257.1 2907.0,257.3 2906.4,259.6 L2904.1000000000004,267.2 C2903.5,269.2 2901.7000000000003,269.8 2900.4,268.5" fill="none" stroke="#6cbcf8" stroke-width="1.35" stroke-linecap="round"/><path d="M2903.0,261.5 H2910.0" fill="none" stroke="#6cbcf8" stroke-width="1.3" stroke-linecap="round"/><path d="M2902.45,302.65 H2906.85 L2912.85,309.25 L2906.85,315.85 H2902.45 Q2901.65,315.85 2901.65,314.85 V303.65 Q2901.65,302.65 2902.45,302.65 Z" fill="#fff" stroke="#fff" stroke-width="0.8" stroke-linejoin="round"/><path d="M3153.6,303.25 H3157.6 L3163,309.25 L3157.6,315.25 H3153.6 Q3152.9,315.25 3152.9,314.45 V304.05 Q3152.9,303.25 3153.6,303.25 Z" fill="none" stroke="#fff" stroke-width="1.5" stroke-linejoin="round"/><circle cx="2906.75" cy="340.25" r="5.7" fill="#00a8f0"/><path d="M2912.75,337.55 L2916.35,340.25 L2912.75,342.95 Z" fill="#00a8f0"/><rect x="2900.80" y="364.20" width="3.2" height="3.2" fill="#00766b"/><rect x="2900.80" y="368.40" width="3.2" height="3.2" fill="#00766b"/><rect x="2900.80" y="372.60" width="3.2" height="3.2" fill="#00766b"/><rect x="2905.00" y="364.20" width="3.2" height="3.2" fill="#00766b"/><rect x="2905.00" y="368.40" width="3.2" height="3.2" fill="#00766b"/><rect x="2905.00" y="372.60" width="3.2" height="3.2" fill="#00766b"/><rect x="2909.20" y="364.20" width="3.2" height="3.2" fill="#00766b"/><rect x="2909.20" y="368.40" width="3.2" height="3.2" fill="#00766b"/><rect x="2909.20" y="372.60" width="3.2" height="3.2" fill="#00766b"/><circle cx="2906.75" cy="414.5" r="4.75" fill="rgba(8,8,8,.55)" stroke="#00766b" stroke-width="1.9"/><path d="M2912.75,411.8 L2916.35,414.5 L2912.75,417.2 Z" fill="#00766b"/><path d="M3093.9,419.3 L3098,423.3 L3102.1,419.3" fill="none" stroke="#e0e0e0" stroke-width="1.6" stroke-linecap="round" stroke-linejoin="round"/></svg>
<span class="t" style="left:52.83px;top:48px;font-size:32.5px;color:#f0f0f0;font-weight:700;text-shadow:1.3px 1.8px 0.6px rgba(0,0,0,.9);transform:scaleX(0.9245);">Set up audio import and playback via Runtime Audio Importer</span>
<span class="t" style="left:53.13px;top:87px;font-size:32.5px;color:#f0f0f0;font-weight:700;text-shadow:1.3px 1.8px 0.6px rgba(0,0,0,.9);transform:scaleX(0.9226);">You can also pass this to Lip Sync or other operations</span>
<span class="t" style="left:109.70px;top:179px;font-size:13.5px;color:#d6d6d6;font-weight:700;text-shadow:1px 1px 1px rgba(0,0,0,.7);transform:scaleX(0.8945);">Create Runtime Audio Importer</span>
<span class="t" style="left:219.69px;top:240px;font-size:13.5px;color:#fff;transform:scaleX(0.9092);">Return Value</span>
<span class="t" style="left:467.79px;top:199px;font-size:12px;color:#b8c2c8;font-weight:700;transform:scaleX(0.9348);">SET</span>
<span class="t" style="left:421.40px;top:240px;font-size:13.5px;color:#fff;transform:scaleX(0.8977);">Audio Importer</span>
<span class="t" style="left:719.53px;top:179px;font-size:13.5px;color:#d6d6d6;font-weight:700;text-shadow:1px 1px 1px rgba(0,0,0,.7);transform:scaleX(0.8739);">Bind Event to On Result</span>
<span class="t" style="left:723.99px;top:240px;font-size:13.5px;color:#fff;transform:scaleX(0.9270);">Target</span>
<span class="t" style="left:719.52px;top:270px;font-size:13.5px;color:#fff;transform:scaleX(0.8760);">Event</span>
<span class="t" style="left:463.00px;top:337px;font-size:13.5px;color:#d6d6d6;font-weight:700;text-shadow:1px 1px 1px rgba(0,0,0,.7);transform:scaleX(0.8941);">OnResult_Event_0</span>
<span class="t" style="left:463.01px;top:354px;font-size:13.5px;color:#c89a68;font-style:italic;transform:scaleX(0.8799);">Custom Event</span>
<span class="t" style="left:523.04px;top:414px;font-size:13.5px;color:#fff;transform:scaleX(0.9092);">Importer</span>
<span class="t" style="left:450.06px;top:444px;font-size:13.5px;color:#fff;transform:scaleX(0.8920);">Imported Sound Wave</span>
<span class="t" style="left:533.88px;top:474px;font-size:13.5px;color:#fff;transform:scaleX(0.9324);">Status</span>
<span class="t" style="left:690.84px;top:474px;font-size:11.5px;color:#c4c4c4;transform:scaleX(0.9862);">Success</span>
<span class="t" style="left:1039.59px;top:353px;font-size:13.5px;color:#c8c8c8;font-weight:700;text-shadow:1px 1px 1px rgba(0,0,0,.7);transform:scaleX(0.9067);">Branch</span>
<span class="t" style="left:1135.21px;top:383px;font-size:13.5px;color:#fff;transform:scaleX(0.8829);">True</span>
<span class="t" style="left:1043.88px;top:414px;font-size:13.5px;color:#fff;transform:scaleX(0.9341);">Condition</span>
<span class="t" style="left:1129.60px;top:415px;font-size:13.5px;color:#fff;transform:scaleX(0.9016);">False</span>
<span class="t" style="left:1248.62px;top:353px;font-size:13.5px;color:#d6d6d6;font-weight:700;text-shadow:1px 1px 1px rgba(0,0,0,.7);transform:scaleX(0.8763);">Play Sound 2D</span>
<span class="t" style="left:1252.64px;top:414px;font-size:13.5px;color:#fff;transform:scaleX(0.9093);">Sound</span>
<span class="t" style="left:1505.35px;top:257px;font-size:13.5px;color:#d6d6d6;font-weight:700;text-shadow:1px 1px 1px rgba(0,0,0,.7);transform:scaleX(0.9028);">Make Chatbot Integrator Eleven Labs TTSSettings</span>
<span class="t" style="left:1509.94px;top:286px;font-size:13.5px;color:#fff;transform:scaleX(0.9247);">Text</span>
<span class="t" style="left:1519.28px;top:303px;font-size:13.5px;color:#c8c8c8;transform:scaleX(0.9652);">Hi, this is my speech</span>
<span class="t" style="left:1510.25px;top:335px;font-size:13.5px;color:#fff;transform:scaleX(0.8809);">Voice ID</span>
<span class="t" style="left:1519.63px;top:352px;font-size:13.5px;color:#c8c8c8;transform:scaleX(0.9330);">gOkFV1JMCt0G0n9xmBwV</span>
<span class="t" style="left:1509.33px;top:384px;font-size:13.5px;color:#fff;transform:scaleX(0.9214);">Model</span>
<span class="t" style="left:1525.68px;top:407px;font-size:11.5px;color:#c4c4c4;transform:scaleX(0.9605);">eleven_turbo_v2</span>
<span class="t" style="left:1509.64px;top:442px;font-size:13.5px;color:#fff;transform:scaleX(0.9151);">Output Format</span>
<span class="t" style="left:1525.37px;top:465px;font-size:11.5px;color:#c4c4c4;transform:scaleX(0.9407);">mp3_22050_32</span>
<span class="t" style="left:1510.25px;top:500px;font-size:13.5px;color:#fff;transform:scaleX(0.9059);">Voice Settings</span>
<span class="t" style="left:1509.94px;top:530px;font-size:13.5px;color:#fff;transform:scaleX(0.9227);">Text Normalization</span>
<span class="t" style="left:1525.66px;top:553px;font-size:11.5px;color:#c4c4c4;transform:scaleX(1.0269);">auto</span>
<span class="t" style="left:1510.25px;top:589px;font-size:13.5px;color:#fff;transform:scaleX(0.9156);">Apply Language Text Normalization</span>
<span class="t" style="left:1509.34px;top:639px;font-size:13.5px;color:#fff;transform:scaleX(0.9085);">Language Code</span>
<span class="t" style="left:1509.69px;top:674px;font-size:13.5px;color:#fff;transform:scaleX(0.8417);">Seed</span>
<span class="t" style="left:1545.81px;top:675px;font-size:13.5px;color:#c8c8c8;transform:scaleX(1.0313);">-1</span>
<span class="t" style="left:1509.33px;top:709px;font-size:13.5px;color:#fff;transform:scaleX(0.9163);">Previous Text</span>
<span class="t" style="left:1509.34px;top:744px;font-size:13.5px;color:#fff;transform:scaleX(0.9091);">Next Text</span>
<span class="t" style="left:1505.62px;top:777px;font-size:13.5px;color:#fff;transform:scaleX(0.8798);">Previous Request IDs</span>
<span class="t" style="left:1505.63px;top:807px;font-size:13.5px;color:#fff;transform:scaleX(0.8674);">Next Request IDs</span>
<span class="t" style="left:1509.33px;top:839px;font-size:13.5px;color:#fff;transform:scaleX(0.9185);">Enable Logging</span>
<span class="t" style="left:1734.40px;top:286px;font-size:13.5px;color:#fff;transform:scaleX(0.8951);">Chatbot Integrator Eleven Labs TTSSettings</span>
<span class="t" style="left:2067.21px;top:179px;font-size:13.5px;color:#d6d6d6;font-weight:700;text-shadow:1px 1px 1px rgba(0,0,0,.7);transform:scaleX(0.8727);">Send ElevenLabs TTS Request</span>
<span class="t" style="left:2070.96px;top:240px;font-size:13.5px;color:#fff;transform:scaleX(0.8761);">TTS Settings</span>
<span class="t" style="left:2171.25px;top:240px;font-size:13.5px;color:#fff;transform:scaleX(0.9170);">Async Action</span>
<span class="t" style="left:2175.66px;top:271px;font-size:13.5px;color:#fff;transform:scaleX(0.8777);">On Complete</span>
<span class="t" style="left:2185.25px;top:302px;font-size:13.5px;color:#fff;transform:scaleX(0.8918);">Audio Data</span>
<span class="t" style="left:2177.35px;top:333px;font-size:13.5px;color:#fff;transform:scaleX(0.9021);">Error Status</span>
<span class="t" style="left:2385.34px;top:319px;font-size:28.6px;color:#8c8c8c;font-weight:700;transform:scaleX(0.7300);-webkit-text-stroke:0.7px #8c8c8c;">Error</span>
<span class="t" style="left:2563.59px;top:241px;font-size:13.5px;color:#c8c8c8;font-weight:700;text-shadow:1px 1px 1px rgba(0,0,0,.7);transform:scaleX(0.9067);">Branch</span>
<span class="t" style="left:2659.21px;top:271px;font-size:13.5px;color:#fff;transform:scaleX(0.8829);">True</span>
<span class="t" style="left:2567.62px;top:302px;font-size:13.5px;color:#fff;transform:scaleX(0.9386);">Condition</span>
<span class="t" style="left:2653.34px;top:303px;font-size:13.5px;color:#fff;transform:scaleX(0.9096);">False</span>
<span class="t" style="left:2747.25px;top:343px;font-size:13.5px;color:#fff;transform:scaleX(0.9000);">Audio Importer</span>
<span class="t" style="left:2916.35px;top:256px;font-size:13.5px;color:#d6d6d6;font-weight:700;text-shadow:1px 1px 1px rgba(0,0,0,.7);transform:scaleX(0.9019);">Import Audio from Buffer</span>
<span class="t" style="left:2916.04px;top:273px;font-size:13.5px;color:#a4a884;font-style:italic;transform:scaleX(0.9044);">Target is Runtime Audio Importer Library</span>
<span class="t" style="left:2921.44px;top:333px;font-size:13.5px;color:#fff;transform:scaleX(0.9270);">Target</span>
<span class="t" style="left:2917.25px;top:363px;font-size:13.5px;color:#fff;transform:scaleX(0.8955);">Audio Data</span>
<span class="t" style="left:2921.25px;top:393px;font-size:13.5px;color:#fff;transform:scaleX(0.9074);">Audio Format</span>
<span class="t" style="left:2936.56px;top:416px;font-size:11.5px;color:#c4c4c4;transform:scaleX(1.0312);">mp3</span>
</body></html>
